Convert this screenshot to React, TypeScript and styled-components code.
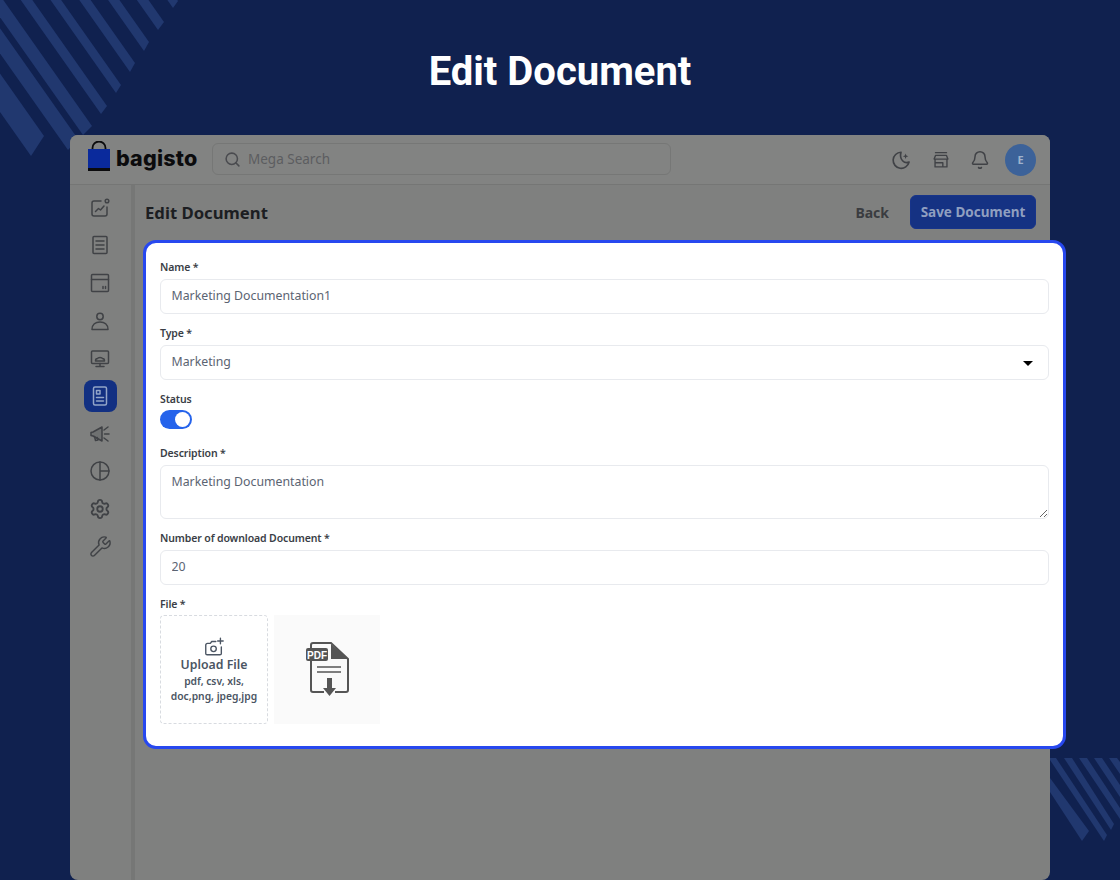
import React from "react";
import styled, { createGlobalStyle } from "styled-components";
import { Bell, Search, Settings, Wrench } from "lucide-react";

const Global = createGlobalStyle`
  html, body { margin: 0; padding: 0; height: 880px; overflow: hidden; background: #10214f; }
  * { box-sizing: border-box; }
`;

const uiFont = `"Noto Sans", "Open Sans", sans-serif`;

const Page = styled.div`
  position: relative;
  width: 1120px;
  height: 880px;
  overflow: hidden;
  background: #10214f;
`;
const Decor = styled.svg`
  position: absolute;
  left: 0;
  top: 0;
  width: 1120px;
  height: 880px;
`;
const Title = styled.h1`
  position: relative;
  margin: 0;
  height: 135px;
  text-align: center;
  color: #fff;
  font: 700 40px/143px Roboto, sans-serif;
`;
const Window = styled.div`
  position: relative;
  margin-left: 70px;
  width: 980px;
  height: 745px;
  border-radius: 8px;
  background: #7f807f;
  display: flex;
  flex-direction: column;
  font-family: ${uiFont};
`;
const Header = styled.header`
  height: 50px;
  flex: none;
  display: flex;
  align-items: center;
  padding: 0 14px 0 18px;
  background: #828382;
  border-bottom: 1px solid #757675;
  border-radius: 8px 8px 0 0;
`;
const Logo = styled.div`
  display: flex;
  align-items: center;
  gap: 5px;
  width: 124px;
  flex: none;
`;
const LogoMark = styled.svg`
  flex: none;
  margin-top: -8px;
`;
const LogoText = styled.span`
  font: 800 21.5px/30px Inter, sans-serif;
  color: #0b0b0d;
  letter-spacing: 0.2px;
  margin-top: -4px;
`;
const SearchBox = styled.div`
  width: 459px;
  height: 32px;
  display: flex;
  align-items: center;
  gap: 7px;
  padding-left: 11px;
  border: 1px solid #767776;
  border-radius: 6px;
  color: #5c5d60;
  font-size: 13.5px;
  margin-top: -1px;
`;
const HeaderTools = styled.div`
  margin-left: auto;
  display: flex;
  align-items: center;
  gap: 18px;
  color: #404246;
`;
const Avatar = styled.div`
  width: 31px;
  height: 32px;
  border-radius: 50%;
  margin-left: -3px;
  background: #3c6299;
  color: #9fb2cc;
  display: flex;
  align-items: center;
  justify-content: center;
  font-size: 11px;
  font-weight: 700;
`;
const Body = styled.div`
  flex: 1;
  display: flex;
  min-height: 0;
`;
const Sidebar = styled.nav`
  width: 65px;
  flex: none;
  border-right: 4px solid #767776;
  display: flex;
  flex-direction: column;
  align-items: center;
  padding: 4px 1px 0 0;
  color: #404246;
`;
const NavItem = styled.div<{ $active?: boolean }>`
  width: 33px;
  height: 37.6px;
  display: flex;
  align-items: center;
  justify-content: center;
  position: relative;
  color: ${(p) => (p.$active ? "#93a5c8" : "#404246")};
  &::before {
    content: "";
    display: ${(p) => (p.$active ? "block" : "none")};
    position: absolute;
    left: 0;
    top: 3px;
    width: 33px;
    height: 32px;
    border-radius: 8px;
    background: #123082;
  }
  svg { position: relative; }
`;
const Main = styled.main`
  flex: 1;
  padding: 10px 14px 0 10px;
`;
const PageHead = styled.div`
  height: 34px;
  display: flex;
  align-items: center;
`;
const PageTitle = styled.div`
  font-size: 16.7px;
  font-weight: 700;
  color: #1c1e22;
`;
const HeadActions = styled.div`
  margin-left: auto;
  display: flex;
  align-items: center;
  gap: 21px;
`;
const BackLink = styled.span`
  font-size: 14px;
  font-weight: 700;
  color: #3a3c40;
`;
const SaveButton = styled.button`
  width: 126px;
  height: 34px;
  border: 1px solid #17348a;
  border-radius: 6px;
  background: #153283;
  color: #8f9fc0;
  font: 700 13.5px ${uiFont};
  padding: 0;
`;
const Card = styled.section`
  position: absolute;
  left: 73px;
  top: 105px;
  width: 923px;
  height: 509px;
  background: #fff;
  border: 3px solid #2748ef;
  border-radius: 13px;
  padding: 15px 14px 0;
`;
const Field = styled.div<{ $gap?: number }>`
  margin-bottom: 10px;
  margin-top: ${(p) => p.$gap ?? 0}px;
`;
const Label = styled.label`
  display: block;
  height: 18px;
  margin-bottom: 3px;
  font: 600 10.5px/18px ${uiFont};
  letter-spacing: -0.12px;
  color: #3a3e46;
`;
const inputStyle = `
  display: block;
  width: 100%;
  border: 1px solid #e8eaee;
  border-radius: 6px;
  background: #fff;
  padding: 0 10.5px 2px;
  font: 400 12.3px ${uiFont};
  color: #5b6472;
  outline: none;
`;
const TextInput = styled.input`
  ${inputStyle}
  height: 35px;
`;
const SelectWrap = styled.div`
  position: relative;
`;
const SelectBox = styled.select`
  ${inputStyle}
  height: 35px;
  appearance: none;
`;
const Caret = styled.span`
  position: absolute;
  right: 16px;
  top: 15.5px;
  border-left: 5px solid transparent;
  border-right: 5px solid transparent;
  border-top: 5px solid #000;
`;
const TextArea = styled.textarea`
  ${inputStyle}
  height: 54px;
  padding-top: 7px;
  line-height: 18px;
`;
const Toggle = styled.span`
  display: block;
  position: relative;
  width: 32px;
  height: 19px;
  margin-top: -1px;
  border-radius: 10px;
  background: #2563eb;
  &::after {
    content: "";
    position: absolute;
    right: 2px;
    top: 2px;
    width: 15px;
    height: 15px;
    border-radius: 50%;
    background: #fff;
  }
`;
const FileRow = styled.div`
  display: flex;
  gap: 6px;
  margin-top: -1px;
`;
const UploadBox = styled.div`
  width: 108px;
  height: 109px;
  border: 1px dashed #d8dbe0;
  border-radius: 4px;
  display: flex;
  flex-direction: column;
  align-items: center;
  padding-top: 20px;
  color: #4b5563;
`;
const UploadTitle = styled.div`
  font-size: 12.3px;
  font-weight: 600;
  line-height: 16px;
  margin-top: -1px;
`;
const UploadHint = styled.div`
  font-size: 10.3px;
  font-weight: 600;
  line-height: 15px;
  text-align: center;
  margin-top: 1px;
`;
const Preview = styled.div`
  width: 106px;
  height: 109px;
  background: #fafafa;
  display: flex;
  align-items: center;
  justify-content: center;
`;
const Glyph = styled.svg.attrs({ viewBox: "0 0 24 24", fill: "none", stroke: "currentColor", strokeLinecap: "round", strokeLinejoin: "round" })<{ $s?: number }>`
  width: ${(p) => p.$s ?? 24}px;
  height: ${(p) => p.$s ?? 24}px;
  stroke-width: 1.5;
  flex: none;
`;

const band = (cx: number, cy: number, tx: number, ty: number, k = 200) =>
  `${cx},${cy} ${tx},${ty} ${tx - k},${ty - k * 1.42} ${cx - k},${cy - k * 1.42}`;
const topLeft: [number, number, number, number][] = [
  [44, 136, 31, 156],
  [78, 139, 68, 150],
  [92, 126, 83, 135],
  [107, 106, 101, 114],
  [121, 85, 116, 93],
  [135, 63, 130, 72],
  [149, 42, 144, 51],
  [164, 22, 158, 30],
  [178, 1, 173, 8],
];
const bottomRight: string[] = [
  "1050,778 1089,831 1082,841 1050,792",
  "1050,758 1056,758 1107,835 1104,841 1050,760",
  "1064,758 1072,758 1114,824 1111,830",
  "1079,758 1087,758 1120,808 1120,819",
  "1094,758 1102,758 1120,785 1120,797",
  "1109,758 1117,758 1120,762 1120,774",
];

const navIcons: React.ReactNode[] = [
  <><path d="M13 5H6a2 2 0 0 0-2 2v11a2 2 0 0 0 2 2h11a2 2 0 0 0 2-2v-7" /><circle cx="19" cy="5" r="1.8" /><path d="M7.5 15.5l3-3 2 1.5 3.5-4" /></>,
  <><rect x="5" y="3.5" width="14" height="17" rx="1" /><path d="M8 8h8M8 12h8M8 16h8" /></>,
  <><rect x="3.500" y="3.500" width="17" height="17" rx="1" /><path d="M3.500 8.500h17M15 17.500v-2M17.500 17.500v-2" /></>,
  <><circle cx="12" cy="7.500" r="3.200" /><path d="M4 20.500c0-5 3.500-7.500 8-7.500s8 2.500 8 7.500z" /></>,
  <><rect x="3.500" y="5" width="17" height="12.500" rx="1" /><path d="M8 20.500h8M12 17.500v3M7.500 15c0-2 1.500-2.500 2-2.500.5-1.500 4.500-1.500 5 0 .5 0 2 .5 2 2.500z" /></>,
  <><rect x="5.500" y="3" width="13" height="18" rx="1.500" /><rect x="8.500" y="6.500" width="3.500" height="3.500" /><path d="M8.500 13.500h7M8.500 17h7" /></>,
  <><path d="M3 11.500v3l2 .5 9 5V6L5 11z" fill="currentColor" fillOpacity="0.25" /><path d="M6.500 15.500l1 4 2.500-.5-.8-2.500M16.500 13h4.500M16 9l4-3M16 17l4 3" /></>,
  <><circle cx="12" cy="12" r="9" /><path d="M12 3v18M12 12h9" /></>,
];

const App = () => (
  <Page>
    <Global />
    <Decor aria-hidden="true">
      {topLeft.map(([a, b, c, d], i) => (
        <polygon key={i} points={band(a, b, c, d)} fill="#21386f" />
      ))}
      {bottomRight.map((p) => (
        <polygon key={p} points={p} fill="#21386f" />
      ))}
    </Decor>
    <Title>Edit Document</Title>
    <Window>
      <Header>
        <Logo>
          <LogoMark width="23" height="30" viewBox="0 0 23 30" aria-hidden="true">
            <path d="M4.500 9V7a6.500 6.500 0 0 1 13 0v2" fill="none" stroke="#0b0b0d" strokeWidth="1.800" />
            <rect x="0" y="8" width="22" height="20" fill="#0a2a9c" />
            <rect x="0" y="27" width="22" height="3" fill="#0b0b0d" />
          </LogoMark>
          <LogoText>bagisto</LogoText>
        </Logo>
        <SearchBox>
          <Search size={17} color="#4a4b4f" strokeWidth={2.200} />
          Mega Search
        </SearchBox>
        <HeaderTools>
          <Glyph $s={22}>
            <path d="M12 3.500a8.800 8.800 0 1 0 8.800 10.800c-5 2-11-2.500-8.800-10.800z" strokeWidth="1.800" />
            <path d="M17 5l.8 2.200L20 8l-2.200.8L17 11l-.8-2.200L14 8l2.200-.8z" fill="currentColor" stroke="none" />
          </Glyph>
          <Glyph $s={22}>
            <path d="M6 4h12M4.500 11l1.500-4h12l1.500 4zM5.500 11v8.500h13V11M5.500 15H14v4.500" />
          </Glyph>
          <Bell size={20} strokeWidth={1.800} />
          <Avatar>E</Avatar>
        </HeaderTools>
      </Header>
      <Body>
        <Sidebar>
          {navIcons.map((ic, i) => (
            <NavItem key={i} $active={i === 5}>
              <Glyph>{ic}</Glyph>
            </NavItem>
          ))}
          <NavItem>
            <Settings size={22} strokeWidth={2} />
          </NavItem>
          <NavItem>
            <Wrench size={23} strokeWidth={1.500} />
          </NavItem>
        </Sidebar>
        <Main>
          <PageHead>
            <PageTitle>Edit Document</PageTitle>
            <HeadActions>
              <BackLink>Back</BackLink>
              <SaveButton>Save Document</SaveButton>
            </HeadActions>
          </PageHead>
        </Main>
      </Body>
      <Card>
        <Field>
          <Label>Name *</Label>
          <TextInput readOnly value="Marketing Documentation1" />
        </Field>
        <Field>
          <Label>Type *</Label>
          <SelectWrap>
            <SelectBox value="Marketing" onChange={() => undefined}>
              <option>Marketing</option>
            </SelectBox>
            <Caret />
          </SelectWrap>
        </Field>
        <Field>
          <Label>Status</Label>
          <Toggle />
        </Field>
        <Field $gap={15}>
          <Label>Description *</Label>
          <TextArea readOnly value="Marketing Documentation" />
        </Field>
        <Field>
          <Label>Number of download Document *</Label>
          <TextInput readOnly value="20" />
        </Field>
        <Field>
          <Label>File *</Label>
          <FileRow>
            <UploadBox>
              <Glyph $s={22}>
                <path d="M14 6H9.500L8 8H5a2 2 0 0 0-2 2v9a1.500 1.500 0 0 0 1.500 1.500h14A1.500 1.500 0 0 0 20 19v-7" />
                <circle cx="11.500" cy="14" r="3" />
                <path d="M19 2.500v6M16 5.500h6" />
              </Glyph>
              <UploadTitle>Upload File</UploadTitle>
              <UploadHint>
                pdf, csv, xls,
                <br />
                doc,png, jpeg,jpg
              </UploadHint>
            </UploadBox>
            <Preview>
              <svg width="43" height="55" viewBox="0 0 43 55" aria-hidden="true">
                <path d="M5 6V3a2 2 0 0 1 2-2h18l17 16v31a2 2 0 0 1-2 2H29M18 50H7a2 2 0 0 1-2-2V19" fill="none" stroke="#555" strokeWidth="2" />
                <path d="M25 2l17 15H25z" fill="#555" />
                <rect x="0" y="6" width="22" height="13" rx="2" fill="#555" />
                <text x="11" y="16.500" textAnchor="middle" fontFamily="Liberation Sans, sans-serif" fontWeight="700" fontSize="10" fill="#fff">PDF</text>
                <path d="M11 25h24M11 30h24" stroke="#555" strokeWidth="1.600" fill="none" />
                <path d="M21 36h5v10h4l-6.500 8-6.500-8h4z" fill="#555" />
              </svg>
            </Preview>
          </FileRow>
        </Field>
      </Card>
    </Window>
  </Page>
);

export default App;
